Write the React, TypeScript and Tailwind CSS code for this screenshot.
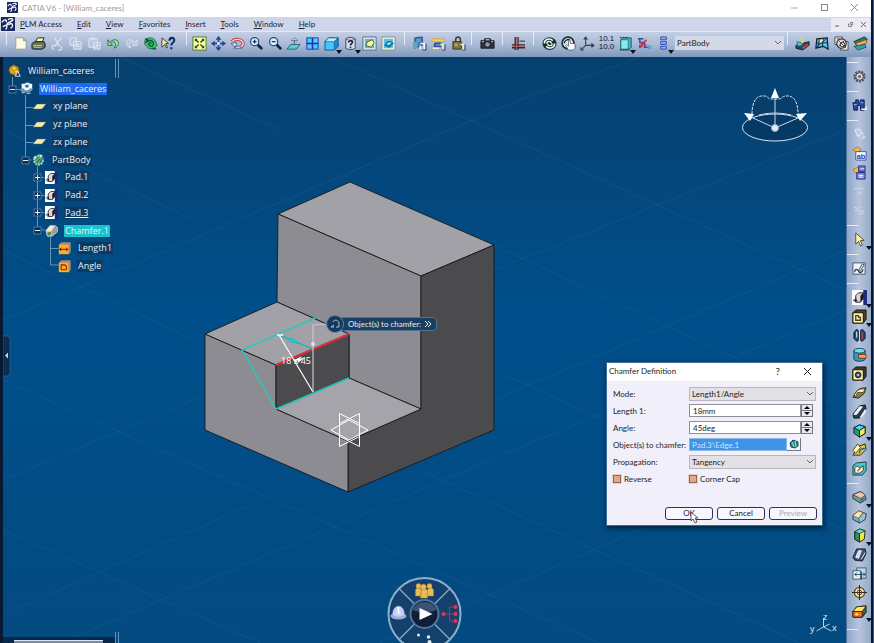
import type { ReactNode } from 'react';
import { clsx } from 'clsx';

const K = '#16243f';

// Shared 16x16 glyphs for the toolbars and the tree
const glyphs: Record<string, ReactNode> = {
  logo: (
    <>
      <rect width="16" height="16" fill="#1b2a66" />
      <path d="M1 6c3-4 6-3 5 0M8 3c3-2 7-1 5 1s-5 1-6 4 1 5-2 6M2 11c3-1 4-3 9-3M10 7c4 0 4 4 1 6" fill="none" stroke="#fff" strokeWidth="1.5" />
    </>
  ),
  newFile: <path d="M3 2h8l3 3v9H3z M11 2v3h3" fill="#fffbe0" stroke="#8b8f86" strokeWidth=".8" />,
  print: (
    <>
      <path d="M5 6l2-4h7l-2 4z" fill="#fff7b0" stroke={K} />
      <path d="M1 8l3-2h10l1 2v4l-3 2H2l-1-1z" fill="#667052" stroke={K} />
      <path d="M2 10h10M3 12h8" stroke="#d5cf6c" />
    </>
  ),
  cut: <path d="M5 2l5 9M12 2L6 10M4 14a2 2 0 1 1 2-3M9 14a2 2 0 1 0 2-3" fill="none" stroke="#dde4f1" strokeWidth="1.3" />,
  copy: <path d="M2 2h7v8H2zM6 6h8v8H6zM8 9h4M8 11h4" fill="#b7c5dc" stroke="#e1e8f4" />,
  paste: <path d="M2 3h9v9H2zM5 2h3v2H5zM7 7h7v7H7zM9 10h4" fill="#b7c5dc" stroke="#e1e8f4" />,
  undo: <path d="M2 4v6h5L5 8c2-3 6-2 5 2l-1 3c5-2 6-8 1-9-3 0-4 1-6 3z" fill="#9fe6a8" stroke="#187a3f" />,
  redo: <path d="M14 4v6H9l2-2C9 5 5 6 6 10l1 3C2 11 1 5 6 4c3 0 4 1 6 3z" fill="#b3c1d9" stroke="#dbe3f1" />,
  refresh: (
    <>
      <path d="M2 5c2-4 9-4 11 0l2 5-4 4-5-1-4-4z" fill="#3fbf75" stroke="#14703e" />
      <path d="M4 7c1-3 6-3 7 0s-2 5-4 3 1-4 2-2M2 3l3 1-2 3M14 14l-4-1" fill="none" stroke="#0a4d2c" strokeWidth="1.3" />
    </>
  ),
  help: (
    <>
      <path d="M1 2v10l3-3 2 4 1-1-2-4h3z" fill="#ffe98a" stroke={K} strokeWidth=".8" />
      <path d="M9 5c0-4 6-4 5 0 0 2-3 2-3 5M11 12v2" fill="none" stroke="#112b66" strokeWidth="2.2" />
    </>
  ),
  fit: (
    <>
      <rect x="1" y="1" width="14" height="14" fill="#ffff9c" stroke="#3e7a35" />
      <path d="M3 3h3L3 6zM13 3v3l-3-3zM3 13v-3l3 3zM13 13h-3l3-3z" fill="#1f3f1f" />
      <path d="M4 4l3 3M12 4L9 7M4 12l3-3M12 12L9 9" stroke="#1f3f1f" strokeWidth="1.400" />
    </>
  ),
  pan: (
    <>
      <path d="M8 0l3 4H5zM8 16l3-4H5zM0 8l4-3v6zM16 8l-4-3v6z" fill="#1d3f86" />
      <path d="M8 3v10M3 8h10" stroke="#2c55a8" strokeWidth="2" />
      <rect x="6.500" y="6.500" width="3" height="3" fill="#dbe6f8" />
    </>
  ),
  rotate: (
    <>
      <path d="M2 6c3-4 11-3 12 2 0 2-1 3-3 4" fill="none" stroke="#c0404c" strokeWidth="3.400" />
      <path d="M2 6c3-4 11-3 12 2 0 2-1 3-3 4" fill="none" stroke="#f6d5d8" strokeWidth="1.400" />
      <path d="M1 8l6-1-1 5zM4 13c3-3 6-3 8 0z" fill="#f3f5ff" stroke="#4a5b8c" />
    </>
  ),
  zoomIn: (
    <>
      <path d="M9 9l5 5" stroke={K} strokeWidth="3" />
      <circle cx="6" cy="6" r="4.3" fill="#d9f0ff" stroke="#254c82" strokeWidth="1.3" />
      <path d="M6 4v4M4 6h4" stroke="#142b5d" strokeWidth="1.3" />
    </>
  ),
  zoomOut: (
    <>
      <path d="M9 9l5 5" stroke={K} strokeWidth="3" />
      <circle cx="6" cy="6" r="4.3" fill="#d9f0ff" stroke="#254c82" strokeWidth="1.3" />
      <path d="M4 6h4" stroke="#142b5d" strokeWidth="1.3" />
    </>
  ),
  normal: (
    <>
      <path d="M5 9h10l-4 5H1z" fill="#63c8d2" stroke="#2a6674" />
      <path d="M9 9V4M6 5l3-3 3 3z" fill="#fff" stroke="#35507f" strokeWidth=".8" />
    </>
  ),
  multi: (
    <>
      <rect x="2" y="2" width="12" height="12" fill="#36d2ff" stroke="#16399d" />
      <path d="M3 9h4v4H3zM9 3h4v4H9z" fill="#7db8ff" />
      <path d="M8 2v12M2 8h12" stroke="#1b2fb4" strokeWidth="1.6" />
    </>
  ),
  cube: (
    <>
      <path d="M1 6l4-4h10v9l-4 4H1z" fill="#43c5ff" stroke="#15538f" />
      <path d="M1 6l4-4h10l-4 4z" fill="#b8eeff" stroke="#15538f" strokeWidth=".7" />
      <path d="M11 6v9l4-4V2z" fill="#2389cf" stroke="#15538f" strokeWidth=".7" />
    </>
  ),
  query: (
    <>
      <path d="M3 3c2-2 8-2 10 0v10c-2 2-8 2-10 0z" fill="#d5d9ec" stroke="#3b4260" />
      <path d="M3 3c2 2 8 2 10 0" fill="none" stroke="#3b4260" strokeWidth=".7" />
      <path d="M6 7c0-3 5-2 4 0 0 1-2 1-2 3M8 11.500v1.500" fill="none" stroke="#171a2e" strokeWidth="1.6" />
    </>
  ),
  hide: (
    <>
      <rect x="1" y="1" width="14" height="14" fill="#e7ecf5" stroke="#4e6f86" />
      <rect x="3" y="3" width="10" height="10" fill="#6fb5b2" />
      <path d="M4 10l2-4 5-2 2 3-3 5z" fill="#fff4a6" stroke="#3c6c4a" />
    </>
  ),
  swap: (
    <>
      <rect x="1" y="1" width="14" height="14" fill="#f5f4d8" stroke="#7f8f8a" />
      <rect x="3" y="3" width="10" height="10" fill="#4cc8e8" />
      <path d="M4 10l3-4h4l2 2-4 4z" fill="#1a86b8" stroke="#135c8f" />
      <path d="M6 9l2-2h3l-2 2z" fill="#eaffff" />
    </>
  ),
  catalog: (
    <>
      <path d="M3 2l8-1v9l-8 3z" fill="#4c78c9" stroke="#27427c" />
      <path d="M1 6h5v7H1zM5 3h4v3H5z" fill="#5aa9b9" />
      <path d="M9 8h4v6M9 14v-4" fill="none" stroke="#f6f6f6" strokeWidth="1.8" />
      <path d="M11 15h4V8" fill="none" stroke="#3c4560" />
    </>
  ),
  sheet: (
    <>
      <path d="M1 3h13v3H1z" fill="#ffd34c" stroke="#c98c1b" strokeWidth=".6" />
      <path d="M4 8h7M4 8v3h7" fill="none" stroke="#2e4d9b" strokeWidth="2" />
      <path d="M10 9h3v5M2 13h7" fill="none" stroke="#f6efc0" strokeWidth="1.6" />
      <path d="M12 15h3V9" fill="none" stroke="#3c4560" />
    </>
  ),
  lock: (
    <>
      <path d="M5 7V4c0-4 5-4 5 0v3" fill="none" stroke="#3a3a2c" strokeWidth="1.6" />
      <path d="M2 6h9v8H2z" fill="#7d7641" stroke="#3a3620" />
      <path d="M4 8h3v3H4z" fill="#b5ab5c" />
      <path d="M10 9h3v6" fill="none" stroke="#f6f2d2" strokeWidth="1.5" />
      <path d="M12 15h3V9" fill="none" stroke="#3c4560" />
    </>
  ),
  camera: (
    <>
      <path d="M1 5h3l1-2h6l1 2h3v8H1z" fill="#30343f" stroke="#171a22" />
      <circle cx="8" cy="9" r="3" fill="#8e9ab0" stroke="#0c0e14" />
      <path d="M2 6h2M12 6h2M6 4h4" stroke="#e4e9f3" />
    </>
  ),
  grid: (
    <>
      <path d="M4.500 1v14M7.500 1v14M1 9.500h14M1 12.500h14" fill="none" stroke="#2f2630" strokeWidth="1.400" />
      <path d="M6 1v14M1 11h14" stroke="#b35a5e" />
      <path d="M9 5.500h6" stroke="#5b3a44" strokeWidth="1.300" />
    </>
  ),
  swirl: (
    <>
      <ellipse cx="8" cy="8" rx="7.500" ry="6.800" fill="#16322e" />
      <path d="M2.500 8c0-5 6-6 9-3M13.500 8c0 5-6 6-9 3" fill="none" stroke="#f3fbf8" strokeWidth="1.700" />
      <path d="M5 8c0-3 5-3 5 0M11 8c0 3-5 3-5 0" fill="none" stroke="#f3fbf8" strokeWidth="1.300" />
    </>
  ),
  manual: (
    <>
      <circle cx="7.500" cy="7.500" r="6.300" fill="#e4ecf4" stroke="#16322e" strokeWidth="1.800" />
      <path d="M3.500 8c0-3 3-5 6-4" fill="none" stroke="#16322e" strokeWidth="1.500" />
      <path d="M8 15l-3-5 1-1 2 2V5h2v3h5v5l-2 2z" fill="#fff" stroke="#4a5064" strokeWidth=".8" />
    </>
  ),
  axis: <path d="M6 10V1M4 4l2-3 2 3M6 10h9M12 8l3 2-3 2M6 10l-5 5M1 12v3h3" fill="none" stroke="#333c50" strokeWidth="1.1" />,
  stack: (
    <>
      <path d="M3 4l2-2h9v10l-2 2H3z" fill="#3ec4cf" stroke="#174d59" />
      <path d="M3 4h8v10H3z" fill="#86eaf0" stroke="#1b4d5c" strokeWidth=".7" />
      <path d="M2 1.500h9M2 15h10" stroke={K} strokeDasharray="2 1" />
    </>
  ),
  link: (
    <>
      <path d="M1 3h6M3 3v4h5v5h7" fill="none" stroke="#2b4fa6" strokeWidth="1.5" />
      <path d="M3 12l7-8M6 11l-3 1V9M4 7l6 3" fill="none" stroke="#c62d3d" strokeWidth="1.7" />
      <path d="M11 10h4v4h-4z" fill="#56a4d7" />
    </>
  ),
  list: <path d="M5 1h6v3H5zM5 6h6v3H5zM5 11h6v3H5z" fill="#90b1ff" stroke="#2b4bb4" />,
  hammer: (
    <>
      <path d="M1 10l6-2 8-2v4l-7 5-7-2z" fill="#34425e" stroke="#1b2334" />
      <path d="M2 6l5 1 1 3-5 1z" fill="#3ccac8" stroke="#1b4a5c" strokeWidth=".6" />
      <path d="M7 1l1 7" stroke="#e6d84b" strokeWidth="1.8" />
      <path d="M8 13l6-4" stroke="#d34444" strokeWidth="1.8" />
    </>
  ),
  mesh: (
    <>
      <path d="M3 3l11-1 1 12-5-3-8 2z" fill="#54c9e6" stroke="#101c38" strokeWidth="1.3" />
      <path d="M6 3L4 12M10 2L9 11M3 8l11-1M3 12L14 2" stroke="#142b5d" fill="none" />
      <path d="M6 4h4l-3 4z" fill="#fff56e" />
    </>
  ),
  target: (
    <>
      <path d="M1 1h8v8H1zM7 6h8v9H7z" fill="#f5eee0" stroke="#4b4a56" />
      <circle cx="8" cy="8" r="5" fill="#e7dfd2" stroke="#272c3a" strokeWidth="1.2" />
      <circle cx="9" cy="9" r="2.500" fill="none" stroke="#272c3a" />
      <path d="M4 4l9 9M12 4l-7 7M3 3h3" stroke="#5b4a4c" />
    </>
  ),
  layers: (
    <>
      <path d="M1 6l11-5 3 2-1 4-10 3z" fill="#2f7a56" stroke="#1c3c2b" />
      <path d="M3 8l11-4 1 3-10 4z" fill="#f0b24b" stroke="#7a4a23" strokeWidth=".6" />
      <path d="M1 11l12-2 1 3-9 3z" fill="#2fa3b7" stroke="#1f5861" />
    </>
  ),
  gear: (
    <>
      <circle cx="8" cy="8" r="5.2" fill="#c4c9d2" stroke="#50535c" strokeWidth="2.6" strokeDasharray="2.2 1" />
      <circle cx="8" cy="8" r="4" fill="#d7dae1" stroke="#45464d" />
      <circle cx="8" cy="8" r="1.7" fill="#8a5a60" />
    </>
  ),
  search: (
    <>
      <path d="M1 5h3V2h3v3h2V2h4v11H9V8H6v5H2z" fill="#2c4797" stroke="#141f4a" />
      <path d="M2 7h3M9 5h3" stroke="#7ba4ff" strokeWidth="1.300" />
      <path d="M10 12h5V9" fill="none" stroke="#f0f4ff" strokeWidth="1.500" />
    </>
  ),
  ghostA: (
    <>
      <path d="M3 3l5-1 3 5-5 3zM7 9l5-2 3 4-5 3z" fill="#bfcadd" stroke="#e4eaf5" />
      <circle cx="12" cy="11" r="3" fill="#c9d3e4" stroke="#8997b0" strokeWidth=".6" />
    </>
  ),
  ghostB: <path d="M2 6l3-2 2 2 3-2 3 2M5 11l3-2 3 2" fill="none" stroke="#d2dceb" />,
  ghostC: <path d="M2 4l4 2 3-2M8 10a2 2 0 1 0 4 0 2 2 0 1 0-4 0M3 8h4" fill="none" stroke="#d2dceb" />,
  rename: (
    <>
      <path d="M1 4l5-3 4 3-5 3z" fill="#ffb93b" stroke="#a65c13" strokeWidth=".7" />
      <path d="M4 6h11v9H4z" fill="#f8f9ff" stroke="#4a4fb0" />
      <text x="5" y="14" fontSize="8" fontWeight="700" fontFamily="Liberation Sans, sans-serif" fill="#303a9e">ab</text>
    </>
  ),
  replace: (
    <>
      <path d="M1 5l6-3 2 4-5 3z" fill="#ffb93b" stroke="#a65c13" strokeWidth=".7" />
      <path d="M7 1h7v6H7zM5 8h9v7H5z" fill="#6a78d7" stroke="#2e357c" />
      <path d="M7 11h5M7 13h5M9 4h4" fill="none" stroke="#e6ecff" strokeWidth="1.3" />
    </>
  ),
  cursor: <path d="M4 1v12l3-3 2 5 2-1-2-5h4z" fill="#fff59d" stroke="#3b3f36" strokeWidth=".9" />,
  sketch: (
    <>
      <path d="M1 2h13v12H1z" fill="#eef4fa" stroke="#44515f" />
      <path d="M3 12c0-5 3-3 4-1s4 2 5-2" fill="none" stroke="#23303c" strokeWidth="1.200" />
      <path d="M7 10l4-7 2 1-4 7z" fill="#cfe6e6" stroke="#23303c" strokeWidth=".8" />
    </>
  ),
  pad: (
    <>
      <path d="M2 0h14v16H2z" fill="#1d2a80" />
      <path d="M0 0h12v16H0z" fill="#fff" />
      <path d="M4 6l3-3h5v6l-3 4H4z" fill="#dcd7d6" stroke="#1a1a24" />
      <path d="M9 6l3-3v6l-3 4z" fill="#16161f" />
      <path d="M1 11h4M3 9.500l2 1.500-2 1.500" fill="none" stroke="#1a1a24" strokeWidth="1.1" />
    </>
  ),
  pocket: (
    <>
      <path d="M1 4l3-3h11v10l-3 4H1z" fill="#4b431a" stroke="#15130a" />
      <path d="M1 4h11v11H1z" fill="#fff2a2" stroke="#15130a" />
      <path d="M4 7h3v2h2v3H4z" fill="#f7f7f0" stroke="#4a3e12" strokeWidth="1.4" />
    </>
  ),
  shaft: (
    <>
      <path d="M2 5c2-4 4-4 5-2v10c-1 2-3 1-5-2zM14 5c-2-4-4-4-5-2v10c1 2 3 1 5-2z" fill="#2e4675" stroke="#101725" />
      <path d="M8 2v13M5 4v6" stroke="#a9edf8" strokeWidth="1.3" />
      <path d="M11 5v7" stroke="#a74a4a" strokeWidth="1.3" />
    </>
  ),
  groove: (
    <>
      <path d="M2 4v9c2 3 10 3 12 0V4z" fill="#2b9cc4" stroke="#123a56" />
      <ellipse cx="8" cy="4" rx="6" ry="2.5" fill="#6fe0f0" stroke="#123a56" />
      <path d="M7 8h8v4H7z" fill="#f0a268" stroke="#7b3715" />
    </>
  ),
  hole: (
    <>
      <path d="M1 4l3-3h11v10l-3 4H1z" fill="#3d3a2c" stroke="#15130a" />
      <path d="M1 4h11v11H1z" fill="#fff2a2" stroke="#15130a" />
      <circle cx="6.5" cy="9.500" r="3" fill="#3d5b7a" stroke="#10151f" />
      <circle cx="6.500" cy="9.500" r="1" fill="#e9f7ff" />
    </>
  ),
  rib: (
    <>
      <path d="M1 13l3-5c2-4 7-5 11-5l-2 6-6 5z" fill="#8a7c4a" stroke="#2c2818" />
      <path d="M2 11l3-4c2-3 5-3 9-3l-2 4H6l-2 4z" fill="#fbe9a5" stroke="#2c2818" strokeWidth=".7" />
    </>
  ),
  slot: (
    <>
      <path d="M1 11l7-9 6-1 1 4-7 10H2z" fill="#2e3a52" stroke="#0f1420" />
      <path d="M2 11l6-8h3l-6 8zM9 14l5-8v3l-4 5z" fill="#f5f5f8" stroke="#f5f5f8" />
    </>
  ),
  stiffener: (
    <>
      <path d="M2 5l6-3 6 2v7l-6 4-6-4z" fill="#259a75" stroke="#0b261d" />
      <path d="M2 5l6-3 6 2-6 4z" fill="#4dd6ff" stroke="#0b261d" />
      <path d="M8 8l6-4v7l-6 4z" fill="#f2ea57" stroke="#0b261d" />
    </>
  ),
  loft: (
    <>
      <path d="M1 14l5-9 8-3 1 6-6 6z" fill="#e5c33f" stroke="#2c2818" />
      <path d="M1 9l5-7 3 4-5 6z" fill="#fff9b6" stroke="#43441f" />
      <path d="M8 12c0-5 3-5 6-5" stroke="#31628c" strokeWidth="1.5" fill="none" />
    </>
  ),
  removeLoft: (
    <>
      <path d="M1 5l4-3 10-1v9l-4 5H1z" fill="#4dc6c6" stroke="#153b45" />
      <path d="M3 7c3-4 5 3 9-2v5l-4 3H3z" fill="#f9f7d9" stroke="#27434c" />
      <path d="M6 11l3-4" stroke="#b3552d" strokeWidth="1.500" />
    </>
  ),
  fillet: (
    <>
      <path d="M1 5l7-3c4 0 7 4 7 8l-6 4-8-5z" fill="#7a9c8e" stroke="#25332f" />
      <path d="M1 5l7-3c3 0 5 2 6 4l-5 3z" fill="#f2c3a8" stroke="#25332f" strokeWidth=".7" />
      <path d="M9 9v5l6-3V8z" fill="#3c7c82" />
    </>
  ),
  chamfer: (
    <>
      <path d="M1 7l6-5 8 3-1 6-6 4-7-4z" fill="#6fb4cc" stroke="#2c3a45" />
      <path d="M1 7l6-5 5 2-5 6z" fill="#ffe2ae" stroke="#6a5333" strokeWidth=".7" />
      <path d="M7 10l5-6 3 1-1 6-6 4z" fill="#8fc3d8" stroke="#2c3a45" strokeWidth=".7" />
    </>
  ),
  draft: (
    <>
      <path d="M3 4l5-3 6 2-1 9-5 3-5-3z" fill="#f8e83c" stroke="#252510" />
      <path d="M3 4l5 2v9l-5-3z" fill="#2f8f6e" stroke="#252510" />
      <path d="M3 4l5-3 6 2-6 3z" fill="#64d9e6" stroke="#252510" strokeWidth=".7" />
    </>
  ),
  shell: (
    <>
      <path d="M1 11l4-9h9l1 5-4 8-8-1z" fill="#405472" stroke="#141b28" />
      <path d="M4 11l3-7h3l-3 8zM10 13l4-7" fill="#cfdaea" stroke="#eef3fa" />
    </>
  ),
  thickness: (
    <>
      <path d="M5 2h10v11H5z" fill="#b9dbe8" stroke="#355b78" />
      <path d="M1 5h8v9H1z" fill="#e7f2ec" stroke="#3a5d5b" />
      <path d="M3 9h11M10 6v9M5 7l-2 2 2 2M12 7l2 2-2 2" fill="none" stroke="#25466e" />
    </>
  ),
  thread: (
    <>
      <circle cx="8" cy="8" r="5.500" fill="#f5e6b8" stroke="#5e4a28" strokeWidth="1.400" />
      <path d="M8 0v16M0 8h16" stroke="#2e2a1c" strokeWidth="1.200" />
      <circle cx="8" cy="8" r="2.500" fill="none" stroke="#5e4a28" />
    </>
  ),
  removeFace: (
    <>
      <path d="M1 8l4-5 10-1v7l-4 5H1z" fill="#2f6b46" stroke="#16241b" />
      <path d="M1 8h10v6H1z" fill="#ee7633" stroke="#3c1a0a" />
      <path d="M1 8l4-5 10-1-4 6z" fill="#ffe75a" stroke="#3c2f0a" />
      <circle cx="5" cy="11" r="1.500" fill="#ffe75a" />
    </>
  ),
  product: (
    <>
      <path d="M2 4l5-3 6 3 1 6-5 4-6-2-2-4z" fill="#d9a520" stroke="#6d4a08" />
      <path d="M4 5l3-2 4 2-3 3zM8 8l4-2v4l-4 2z" fill="#f6cf55" stroke="#936a10" strokeWidth=".6" />
      <path d="M9 15l3-6 3 6z" fill="#1c2d55" stroke="#fff" />
    </>
  ),
  part: (
    <>
      <path d="M0 10l3-4h11l2 3-4 4H3z" fill="#6f93b8" />
      <path d="M2 2h4l1-1h4l1 1h3v6h-3l-2 2H6L5 8H2z" fill="#f5f9fd" />
      <ellipse cx="8.500" cy="5" rx="2.500" ry="2" fill="#4d7393" />
      <path d="M2 13h4M8 14h5" stroke="#8fb3d3" strokeWidth="1.500" />
    </>
  ),
  plane: <path d="M5 5h11l-5 6H0z" fill="#f5edaa" stroke="#5d6c53" strokeWidth=".5" />,
  body: (
    <>
      <circle cx="8" cy="9" r="5.500" fill="#5fae86" stroke="#a9e0bf" strokeWidth="2.500" strokeDasharray="2 1.400" />
      <path d="M5 13l5-6M10 12l3-6M4 9l4-4" stroke="#154b36" strokeWidth="1.200" />
      <path d="M9 2l4 2M2 5l3 2" stroke="#e4f2d7" strokeWidth="1.500" />
    </>
  ),
  chamferNode: (
    <>
      <path d="M1 8l5-6h7l3 3-1 5-6 5H3z" fill="#9a9fa6" stroke="#dfe3e8" strokeWidth=".7" />
      <path d="M1 9l5-7h6l-5 8z" fill="#f6ecc1" />
      <circle cx="5" cy="12" r="3" fill="#5aa55d" stroke="#cfe6a6" strokeWidth=".8" />
      <path d="M4 13l3-3" stroke="#143f1d" />
    </>
  ),
  lengthParam: (
    <>
      <path d="M2 4l2-3h11v11l-2 3z" fill="#e0568a" stroke="#8ccf7a" strokeWidth=".8" />
      <path d="M1 3h12v12H1z" fill="#ffad22" />
      <path d="M2 9h10M4 7L2 9l2 2M10 7l2 2-2 2" fill="none" stroke="#4a2608" strokeWidth="1.200" />
    </>
  ),
  angleParam: (
    <>
      <path d="M2 4l2-3h11v11l-2 3z" fill="#e0568a" stroke="#8ccf7a" strokeWidth=".8" />
      <path d="M1 3h12v12H1z" fill="#ffad22" />
      <path d="M4 12V6h4c3 1 3 3 2 6H4" fill="none" stroke="#6e2c08" strokeWidth="1.300" />
    </>
  ),
};

const Glyph = ({ name, className = 'h-4 w-4' }: { name: string; className?: string }) => (
  <svg viewBox="0 0 16 16" className={clsx('shrink-0', className)} aria-hidden="true">
    {glyphs[name]}
  </svg>
);

const ToolButton = ({ name, menu }: { name: string; menu?: boolean }) => (
  <button type="button" aria-label={name} className="relative flex h-[19px] min-w-0 flex-1 items-center justify-center">
    <Glyph name={name} className="h-[15px] w-[15px]" />
    {menu && (
      <svg viewBox="0 0 6 4" className="absolute -right-px -bottom-px h-1 w-1.5" aria-hidden="true">
        <path d="M0 0h6L3 4z" fill="#0d1220" />
      </svg>
    )}
  </button>
);

const Divider = () => <span className="mx-[3px] h-[13px] w-px shrink-0 self-start bg-[#e6ecf7]" />;

const menus = ['PLM Access', 'Edit', 'View', 'Favorites', 'Insert', 'Tools', 'Window', 'Help'];

const fileTools = ['newFile', 'print', 'cut', 'copy', 'paste', 'undo', 'redo', 'refresh', 'help'];
const viewTools = ['fit', 'pan', 'rotate', 'zoomIn', 'zoomOut', 'normal', 'multi', 'cube', 'query', 'hide', 'swap'];
const rightTools = ['hammer', 'mesh', 'target', 'layers'];
const withMenu = ['cube', 'query', 'stack', 'list', 'cursor', 'pad', 'pocket', 'stiffener', 'fillet', 'draft', 'removeFace'];

const sideGroups = [
  ['gear'],
  ['search'],
  ['ghostA', 'rename', 'replace', 'ghostB', 'ghostC'],
  ['cursor'],
  ['sketch'],
  ['pad', 'pocket', 'shaft', 'groove', 'hole', 'rib', 'slot', 'stiffener', 'loft', 'removeLoft'],
  ['fillet', 'chamfer', 'draft', 'shell', 'thickness', 'thread', 'removeFace'],
];

const ToolGroup = ({ tools, className }: { tools: string[]; className: string }) => (
  <div className={clsx('flex shrink-0', className)}>
    {tools.map((t) => (
      <ToolButton key={t} name={t} menu={withMenu.includes(t)} />
    ))}
  </div>
);

const Chevron = ({ className }: { className: string }) => (
  <svg viewBox="0 0 6 4" className={clsx('pointer-events-none absolute h-1 w-1.5', className)} aria-hidden="true">
    <path d="M0 0l3 3 3-3" fill="none" stroke="#66666e" />
  </svg>
);

const Header = () => (
  <header className="shrink-0">
    <div className="flex h-[17px] items-center bg-white pr-[13px] pb-[2px] pl-[7px] text-[#9b9b9b]">
      <Glyph name="logo" className="h-[11px] w-[11px]" />
      <h1 className="ml-1 flex-1 font-['Lato',sans-serif] text-[8px] leading-3">CATIA V6 - [William_caceres]</h1>
      <div className="flex items-center gap-[23px]">
        <button type="button" aria-label="Minimize">
          <svg viewBox="0 0 7 7" className="h-[7px] w-[7px]"><path d="M0 4h7" stroke="#aaa" /></svg>
        </button>
        <button type="button" aria-label="Maximize">
          <svg viewBox="0 0 7 7" className="h-[7px] w-[7px]"><rect x=".5" y=".5" width="6" height="6" fill="none" stroke="#888" /></svg>
        </button>
        <button type="button" aria-label="Close">
          <svg viewBox="0 0 7 7" className="h-[7px] w-[7px]"><path d="M0 0l7 7M7 0L0 7" stroke="#888" /></svg>
        </button>
      </div>
    </div>
    <nav className="flex h-[14px] items-center bg-[#cfd6e9] text-[#1c2436]">
      <Glyph name="logo" className="h-[14px] w-[16px]" />
      <div className="ml-1 flex flex-1 gap-[15px] font-['Lato',sans-serif] text-[8px] leading-3">
        {menus.map((m) => (
          <button key={m} type="button">
            <span className="underline">{m[0]}</span>
            {m.slice(1)}
          </button>
        ))}
      </div>
      <div className="mr-px flex h-[13px] w-[39px] items-center justify-around bg-[#eceaf2]">
        <svg viewBox="0 0 5 5" className="h-[5px] w-[5px]"><path d="M0 4h4" stroke="#666" /></svg>
        <svg viewBox="0 0 5 5" className="h-[5px] w-[5px]"><path d="M2 .5h2.500v2.500M.5 2h3v2.500h-3z" fill="none" stroke="#888" /></svg>
        <svg viewBox="0 0 5 5" className="h-[5px] w-[5px]"><path d="M0 0l5 5M5 0L0 5" stroke="#666" /></svg>
      </div>
    </nav>
    <div className="flex h-[26px] items-center border-t border-[#e3e9f5] bg-linear-to-b from-[#c3cfe4] via-[#a9bad5] to-[#8098bb] pb-[3px] pl-[3px] [&>*]:shrink-0">
      <Divider />
      <ToolGroup tools={fileTools} className="ml-px w-[167px]" />
      <span className="w-[5px]" />
      <Divider />
      <ToolGroup tools={viewTools} className="w-[208px]" />
      <span className="w-[3px]" />
      <Divider />
      <ToolGroup tools={['catalog', 'sheet', 'lock']} className="ml-[2px] w-[58px]" />
      <Divider />
      <ToolGroup tools={['camera']} className="w-6" />
      <Divider />
      <ToolGroup tools={['grid']} className="w-6" />
      <Divider />
      <div className="ml-[3px] flex w-[133px]">
        <ToolButton name="swirl" />
        <ToolButton name="manual" />
        <ToolButton name="axis" />
        <button type="button" aria-label="Tolerance" className="flex-1 font-['Liberation_Sans',sans-serif] text-[8px] leading-[8px] text-[#10182c]">
          10.1
          <br />
          10.0
        </button>
        <ToolButton name="stack" menu />
        <ToolButton name="link" />
        <ToolButton name="list" menu />
      </div>
      <div className="relative ml-[2px] w-[109px]">
        <select aria-label="Active body" className="block h-[14px] w-full appearance-none bg-[#d3d9e6] pl-[2px] font-['Lato',sans-serif] text-[8px] leading-3 text-[#222]">
          <option>PartBody</option>
        </select>
        <Chevron className="top-[5px] right-[3px]" />
      </div>
      <Divider />
      <ToolGroup tools={rightTools} className="mr-px ml-auto w-[77px]" />
    </div>
  </header>
);

const treeRows = [
  { label: 'William_caceres', icon: 'product', pad: 'pl-[5px]' },
  { label: 'William_caceres', icon: 'part', pad: 'pl-[17px]', selected: true },
  { label: 'xy plane', icon: 'plane', pad: 'pl-[30px]' },
  { label: 'yz plane', icon: 'plane', pad: 'pl-[30px]' },
  { label: 'zx plane', icon: 'plane', pad: 'pl-[30px]' },
  { label: 'PartBody', icon: 'body', pad: 'pl-[29px]' },
  { label: 'Pad.1', icon: 'pad', pad: 'pl-[42px]' },
  { label: 'Pad.2', icon: 'pad', pad: 'pl-[42px]' },
  { label: 'Pad.3', icon: 'pad', pad: 'pl-[42px]', underline: true },
  { label: 'Chamfer.1', icon: 'chamferNode', pad: 'pl-[42px]', active: true },
  { label: 'Length1', icon: 'lengthParam', pad: 'pl-[55px]' },
  { label: 'Angle', icon: 'angleParam', pad: 'pl-[55px]' },
];

const expanders = [
  { x: 12, y: 89, open: true },
  { x: 25, y: 160, open: true },
  { x: 37, y: 177, open: false },
  { x: 37, y: 195, open: false },
  { x: 37, y: 212, open: false },
  { x: 37, y: 230, open: true },
];

const SpecTree = () => (
  <ul className="absolute top-[5px] left-0 grid h-[213px] auto-rows-fr text-[9px] leading-3 text-[#e8f1f8]">
    {treeRows.map((row, i) => (
      <li key={i} className={clsx('flex items-center gap-[6px]', row.pad)}>
        <Glyph name={row.icon} className="h-[13px] w-[13px]" />
        <a
          href="#"
          className={clsx(
            'px-px',
            row.selected && 'bg-[#1f6bea]',
            row.active && 'bg-[#19c3c9]',
            !row.selected && !row.active && 'bg-[#0a3a64]',
            row.underline && 'underline'
          )}
        >
          {row.label}
        </a>
      </li>
    ))}
  </ul>
);

const Scene = () => (
  <svg viewBox="3 57 843 586" preserveAspectRatio="xMinYMin meet" className="absolute inset-0 h-full w-full" aria-hidden="true">
    {/* ground grid */}
    <g fill="none" stroke="#2d78ad" strokeOpacity=".22">
      <path d="M3 320L520 100L640 57M3 480L205 395M494 270L846 130M3 615L250 505M494 400L846 250M60 643L420 490L846 310M380 643L846 440" />
      <path d="M3 130L205 225M120 57L280 130M3 250L205 345M3 380L205 470L600 643M3 530L260 643M330 57L846 290M494 245L846 410M494 370L846 530M420 470L800 643" />
    </g>

    {/* tree connectors */}
    <g fill="none" stroke="#8fb4d0" strokeOpacity=".7">
      <path d="M12.500 77v12M16 89.500h6M25.500 95v65h6M25.500 107.500h8M25.500 125.500h8M25.500 142.500h8M37.500 166v64h7M37.500 177.500h7M37.500 195.500h7M37.500 212.500h7M50.500 237v28h8M50.500 248.500h8" />
      <path d="M115.500 59v19M118.500 59v19M115.500 632v11M118.500 632v11" />
    </g>
    {expanders.map(({ x, y, open }) => (
      <g key={`${x}-${y}`}>
        <rect x={x - 3} y={y - 3} width="7" height="7" fill="#0b2f55" stroke="#5f87a8" strokeWidth=".8" />
        <path d={open ? `M${x - 2} ${y + 0.5}h5` : `M${x - 2} ${y + 0.5}h5M${x + 0.5} ${y - 2}v5`} stroke="#e8f1f8" />
      </g>
    ))}

    {/* solid */}
    <g stroke="#17181c" strokeWidth=".9" strokeLinejoin="round">
      <path d="M350 182L494 245L421 276L278 214Z" fill="#a2a1a8" />
      <path d="M278 214L421 276V409L349 378V334L277 302Z" fill="#8d8c92" />
      <path d="M494 245V430L348 492V441L421 409V276Z" fill="#4b4b4e" />
      <path d="M205 334L276 365V409L348 441V492L205 430Z" fill="#8d8c92" />
      <path d="M277 302L349 334L276 365L205 334Z" fill="#a2a1a8" />
      <path d="M276 365L349 334V378L276 409Z" fill="#4b4b4e" />
      <path d="M276 409L349 378L421 409L348 441Z" fill="#a5a4ab" />
    </g>

    {/* chamfer preview */}
    <path d="M315 318L242 350L276 409L349 378" fill="none" stroke="#26c9bd" strokeWidth="1.500" />
    <path d="M276 365L349 334" stroke="#dc2f3d" strokeWidth="2" />
    <path d="M279 335L313 349" stroke="#1fb9c0" strokeWidth="1.500" />
    <path d="M287 338l7 1 4 4-7-1z" fill="#1fc6d0" stroke="#1fb9c0" />
    <path d="M279 335L313 392" stroke="#fff" strokeWidth="1.200" />
    <path d="M313 392V325l14-1" fill="none" stroke="#c6c7cc" strokeWidth="1.200" />
    <circle cx="313" cy="344" r="2" fill="#e3e3e6" />
    <path d="M277 335h6M294 361l6-3-2 4 5-4" fill="none" stroke="#fff" strokeWidth="1.500" />
    <text x="281" y="364" fontSize="9" fill="#fff">18 x 45</text>

    {/* reference planes */}
    <path d="M339.500 413.500l20 10v23l-20-10zM359.500 413.500l-20 10v23l20-10zM331 430l18-10 19 10-19 10z" fill="none" stroke="#fff" />

    {/* wheel */}
    <g transform="translate(424.500 614)">
      <circle r="36" fill="#13406c" stroke="#8fb0cc" strokeWidth="2" />
      <path d="M-25-25L25 25M25-25L-25 25" stroke="#7fa3c2" strokeWidth="1.500" />
      <circle r="14" fill="#101e38" stroke="#51749a" strokeWidth="2" />
      <path d="M-12-4A13 13 0 0 1 12-4C6-1-6-1-12-4Z" fill="#3a5274" />
      <path d="M-5-6L8 0L-5 6Z" fill="#fff" />
      <g fill="#e9bd55" stroke="#b8862b" strokeWidth=".5">
        <path d="M-9-18v-6c1-3 5-3 6 0v6zM3-18v-6c1-3 5-3 6 0v6zM-4-16v-7c1-3 6-3 7 0v7z" />
        <circle cx="-6" cy="-28" r="2.500" />
        <circle cx="5" cy="-28" r="2.500" />
        <circle cx="-1" cy="-27" r="2.800" />
      </g>
      <ellipse cx="-26" cy="2" rx="8" ry="3.500" fill="#9db1e0" />
      <path d="M-32 1c0-12 12-12 12 0-3 3-9 3-12 0z" fill="#c6d1f5" stroke="#7788bd" strokeWidth=".5" />
      <path d="M-26-7v7" stroke="#fff" strokeWidth="1.500" />
      <path d="M19 0H31M31-7H25V7H31" fill="none" stroke="#b52e50" />
      <g fill="#e23556">
        <circle cx="19" r="2" />
        <circle cx="31" cy="-7" r="2" />
        <circle cx="31" cy="0" r="2" />
        <circle cx="31" cy="7" r="2" />
      </g>
      <g fill="#dce8f5">
        <circle cx="-6" cy="21" r="1.500" />
        <circle cx="4" cy="23" r="1.800" />
        <circle cx="5" cy="28" r="2" />
      </g>
    </g>

    {/* side handle and bottom panel edge */}
    <path d="M3 336h5l2 2v36l-2 2H3z" fill="#0a2d52" stroke="#3c6890" strokeWidth=".6" />
    <path d="M8 352.500v6l-3-3z" fill="#c5d9ea" />
    <path d="M3 637H115V643H3Z" fill="#06294a" />
    <path d="M14 640H103V643H14Z" fill="#7c8aa3" />
    <path d="M14 640.500H103" stroke="#d9e2ee" />
  </svg>
);

const Compass = () => (
  <svg viewBox="740 86 70 58" className="absolute top-[29px] right-9 h-[58px] w-[70px]" aria-hidden="true">
    <ellipse cx="775" cy="127.500" rx="32.500" ry="13.500" fill="#063a66" stroke="#d7e4ef" />
    <path d="M752 114c0-10 3-19 12-18 4 0 4 3 7 3h8c3 0 3-3 7-3 9-1 12 8 12 18" fill="#0a3a64" fillOpacity=".5" stroke="#d7e4ef" strokeDasharray="3 1" />
    <path d="M759 115q16-4 32 0M775 128V98M775 128L753 118M775 128L798 118" fill="none" stroke="#c8d8e6" />
    <path d="M775 88l4 10h-8zM744 113l10 1-4 7zM807 113l-11 1 4 7z" fill="#fff" />
    <circle cx="775" cy="128" r="3.500" fill="#e5ebf7" stroke="#93a8cc" />
  </svg>
);

const Triad = () => (
  <svg viewBox="808 606 32 34" className="absolute right-[6px] bottom-[3px] h-[34px] w-8" aria-hidden="true">
    <path d="M823.500 618v9l-7 4M823.500 627l8 4M823.500 627l6-3" fill="none" stroke="#b9cfe0" />
    <g fill="#e6eff7" fontSize="9">
      <text x="823" y="620">z</text>
      <text x="810" y="632">y</text>
      <text x="832" y="631">x</text>
    </g>
  </svg>
);

const Prompt = () => (
  <div className="absolute top-[258px] left-[323px] flex items-center font-['Lato',sans-serif] text-[8px] leading-3 text-[#e3eef6]">
    <span className="z-10 flex h-[18px] w-[18px] items-center justify-center rounded-full border border-[#5d86a5] bg-[#153a5c]">
      <svg viewBox="0 0 10 10" className="h-[10px] w-[10px]" aria-hidden="true">
        <path d="M3 3c1-3 6-2 6 1v4H6M1 8l3-2M1 8h3" fill="none" stroke="#a9c6dc" />
      </svg>
    </span>
    <span className="-ml-2 flex h-[14px] items-center gap-1 rounded-r border border-[#4c7390] bg-[#1c3f5f] pr-[5px] pl-[11px]">
      Object(s) to chamfer:
      <svg viewBox="0 0 6 6" className="h-[6px] w-[6px]" aria-hidden="true">
        <path d="M0 0l3 3-3 3M3 0l3 3-3 3" fill="none" stroke="#e3eef6" />
      </svg>
    </span>
  </div>
);

const SpinField = ({ id, value }: { id: string; value: string }) => (
  <div className="flex h-[13px] w-[124px]">
    <input id={id} defaultValue={value} className="min-w-0 flex-1 border border-[#8f8f98] bg-white px-[3px]" />
    <div className="flex w-[12px] flex-col border border-[#77777f] bg-[#e9e7ee]">
      <button type="button" aria-label="Increase" className="flex flex-1 items-center justify-center border-b border-[#77777f]">
        <svg viewBox="0 0 6 3" className="h-[3px] w-[6px]"><path d="M0 3h6L3 0z" /></svg>
      </button>
      <button type="button" aria-label="Decrease" className="flex flex-1 items-center justify-center">
        <svg viewBox="0 0 6 3" className="h-[3px] w-[6px]"><path d="M0 0h6L3 3z" /></svg>
      </button>
    </div>
  </div>
);

const SelectField = ({ id, value }: { id: string; value: string }) => (
  <div className="relative">
    <select id={id} className="block h-[14px] w-full appearance-none border border-[#b9b6bf] bg-[#e3e0e6] px-[2px]">
      <option>{value}</option>
    </select>
    <Chevron className="top-[5px] right-[3px]" />
  </div>
);

const Check = ({ label }: { label: string }) => (
  <label className="flex items-center gap-[3px]">
    <input
      type="checkbox"
      defaultChecked
      className="h-2 w-2 appearance-none border border-[#8d6a5c] bg-[#f0a478] outline-1 outline-[#d9d4dc]"
    />
    {label}
  </label>
);

const ChamferDialog = () => (
  <section
    role="dialog"
    aria-label="Chamfer Definition"
    className="absolute top-[305px] right-[23px] w-[217px] border border-[#3d6b94] bg-[#f1effa] font-['Lato',sans-serif] text-[8px] leading-3 text-[#1d1d24] shadow-[1px_2px_5px_#001c38]"
  >
    <div className="flex h-[18px] items-center bg-white pr-[11px] pb-[2px] pl-[2px]">
      <h2 className="flex-1">Chamfer Definition</h2>
      <button type="button" className="mr-6 text-[10px]">?</button>
      <button type="button" aria-label="Close dialog">
        <svg viewBox="0 0 7 7" className="h-[7px] w-[7px]"><path d="M0 0l7 7M7 0L0 7" stroke="#222" /></svg>
      </button>
    </div>
    <form className="px-[6px] pt-[4px] pb-[5px]" onSubmit={(e) => e.preventDefault()}>
      <div className="grid auto-rows-[17px] grid-cols-[76px_1fr] items-center whitespace-nowrap">
        <label htmlFor="mode">Mode:</label>
        <SelectField id="mode" value="Length1/Angle" />
        <label htmlFor="length">Length 1:</label>
        <SpinField id="length" value="18mm" />
        <label htmlFor="angle">Angle:</label>
        <SpinField id="angle" value="45deg" />
        <label htmlFor="objects">Object(s) to chamfer:</label>
        <div className="flex h-[13px]">
          <input id="objects" readOnly value="Pad.3\Edge.1" className="w-[98px] border border-[#8fb8e0] bg-[#3d94ea] px-[2px] text-[#cfe5fb]" />
          <button type="button" aria-label="Edit selection" className="flex w-[14px] items-center justify-center border-r border-b border-[#77777f] bg-[#f6f5fa]">
            <svg viewBox="0 0 10 10" className="h-[10px] w-[10px]" aria-hidden="true">
              <path d="M1 4l3-3 5 2v4L6 9 2 8z" fill="#2e8a7c" stroke="#1c3f6e" />
              <path d="M3 3l2 5M6 2l1 6" stroke="#9fe0e6" />
            </svg>
          </button>
        </div>
        <label htmlFor="propagation">Propagation:</label>
        <SelectField id="propagation" value="Tangency" />
        <Check label="Reverse" />
        <Check label="Corner Cap" />
      </div>
      <div className="mt-[20px] -mr-px flex justify-end gap-1">
        {['OK', 'Cancel', 'Preview'].map((b) => (
          <button
            key={b}
            type="button"
            disabled={b === 'Preview'}
            className="h-[13px] w-12 rounded-[3px] border border-[#2f2f63] bg-[#f8f7fd] leading-[11px] disabled:text-[#a9a7b2]"
          >
            {b}
          </button>
        ))}
      </div>
    </form>
    <svg viewBox="0 0 9 13" className="pointer-events-none absolute bottom-px left-[83px] h-[13px] w-[9px]" aria-hidden="true">
      <path d="M1 1v9l2-2 2 4 2-1-2-4h3z" fill="#fff" stroke="#333" strokeWidth=".8" />
    </svg>
  </section>
);

const SideBar = () => (
  <aside className="flex w-[25px] shrink-0 flex-col border-l border-[#4f719b] bg-linear-to-r from-[#8fa6c8] via-[#b6c4dc] to-[#96abca]">
    {sideGroups.map((group) => (
      <div key={group[0]} className="flex flex-col">
        <span className="flex h-[10px] items-center">
          <span className="h-px w-[11px] bg-[#e6ecf7]" />
        </span>
        {group.map((t) => (
          <div key={t} className="flex">
            <ToolButton name={t} menu={withMenu.includes(t)} />
          </div>
        ))}
      </div>
    ))}
    <span className="mt-2 h-px w-[11px] bg-[#e6ecf7]" />
  </aside>
);

export default function App() {
  return (
    <div className="flex h-screen bg-[#081a33] font-['Open_Sans','Noto_Sans',sans-serif]">
      <div className="flex min-w-0 flex-1 flex-col overflow-hidden">
        <Header />
        <div className="flex min-h-0 flex-1 pl-[3px]">
          <main className="relative min-w-0 flex-1 overflow-hidden bg-linear-to-b from-[#06406f] via-[#004f8b] via-45% to-[#034a80]">
            <Scene />
            <SpecTree />
            <Compass />
            <Triad />
            <Prompt />
            <ChamferDialog />
          </main>
          <SideBar />
        </div>
      </div>
      <div className="w-[3px] shrink-0 border-r border-[#44597a]" />
    </div>
  );
}
